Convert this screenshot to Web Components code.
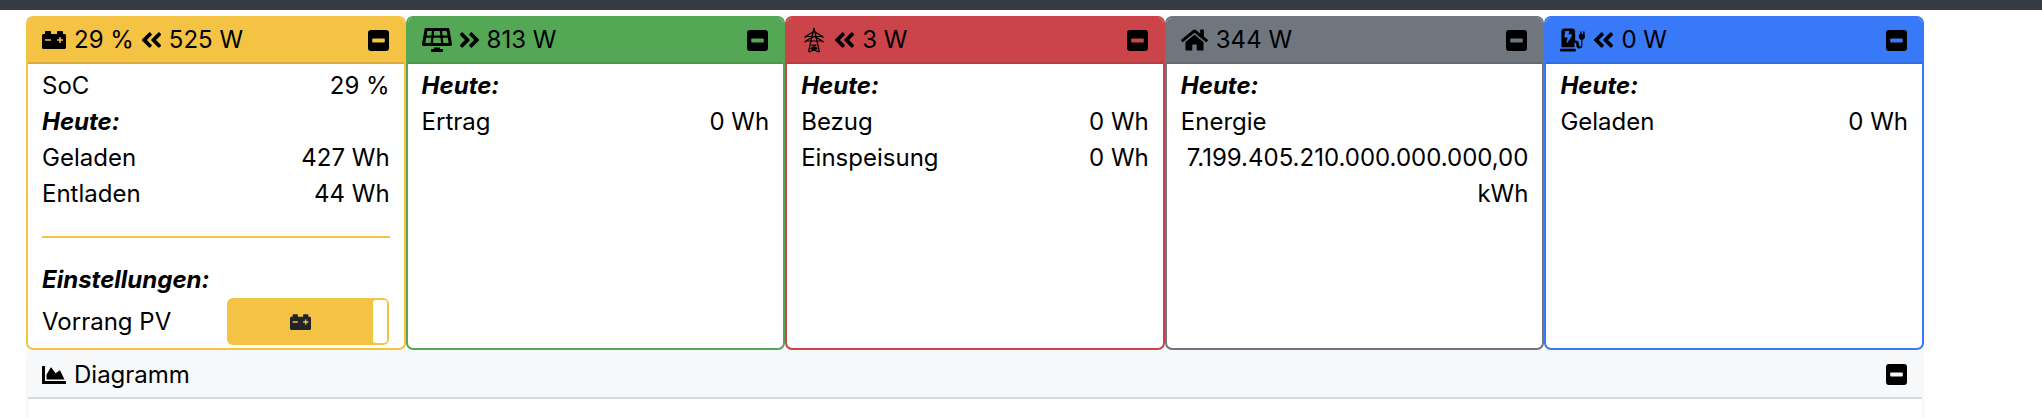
<!DOCTYPE html>
<html lang="de">
<head>
<meta charset="utf-8">
<title>openWB</title>
<style>
  html, body { margin: 0; background: #fff; }
  body { font: 400 24px/36px Inter, "Liberation Sans", sans-serif; color: #000; }
</style>
</head>
<body>
<top-bar></top-bar>
<card-grid>
  <power-card color="#f4c343" edge="#dcab3b">
    <span slot="title"><fa-icon name="battery"></fa-icon><b>29 %</b><fa-icon name="left"></fa-icon><b>525 W</b></span>
    <info-row><span slot="label">SoC</span><span slot="value">29 %</span></info-row>
    <section-title>Heute:</section-title>
    <info-row><span slot="label">Geladen</span><span slot="value">427 Wh</span></info-row>
    <info-row><span slot="label">Entladen</span><span slot="value">44 Wh</span></info-row>
    <card-divider></card-divider>
    <section-title>Einstellungen:</section-title>
    <info-row><span slot="label">Vorrang PV</span><pv-toggle slot="value"></pv-toggle></info-row>
  </power-card>
  <power-card color="#54a754" edge="#4c974c">
    <span slot="title"><fa-icon name="solar"></fa-icon><fa-icon name="right"></fa-icon><b>813 W</b></span>
    <section-title>Heute:</section-title>
    <info-row><span slot="label">Ertrag</span><span slot="value">0 Wh</span></info-row>
  </power-card>
  <power-card color="#cb444a" edge="#b73d43">
    <span slot="title"><fa-icon name="tower"></fa-icon><fa-icon name="left"></fa-icon><b>3 W</b></span>
    <section-title>Heute:</section-title>
    <info-row><span slot="label">Bezug</span><span slot="value">0 Wh</span></info-row>
    <info-row><span slot="label">Einspeisung</span><span slot="value">0 Wh</span></info-row>
  </power-card>
  <power-card color="#6f767d" edge="#646a71">
    <span slot="title"><fa-icon name="home"></fa-icon><b>344 W</b></span>
    <section-title>Heute:</section-title>
    <info-row><span slot="label">Energie</span><span slot="value">7.199.405.210.000.000.000,00 kWh</span></info-row>
  </power-card>
  <power-card color="#3779f7" edge="#316ddf">
    <span slot="title"><fa-icon name="charger"></fa-icon><fa-icon name="left"></fa-icon><b>0 W</b></span>
    <section-title>Heute:</section-title>
    <info-row><span slot="label">Geladen</span><span slot="value">0 Wh</span></info-row>
  </power-card>
</card-grid>
<chart-panel>Diagramm</chart-panel>

<script>
// Font Awesome style glyphs, [viewBox, path, width]
const ICONS = {
  battery: ['0 0 512 512', 'M480 128h-32V80c0-8.84-7.16-16-16-16h-96c-8.84 0-16 7.16-16 16v48H192V80c0-8.84-7.16-16-16-16H80c-8.84 0-16 7.16-16 16v48H32c-17.67 0-32 14.33-32 32v256c0 17.67 14.33 32 32 32h448c17.67 0 32-14.33 32-32V160c0-17.67-14.33-32-32-32zM192 264c0 4.42-3.58 8-8 8H72c-4.42 0-8-3.58-8-8v-16c0-4.42 3.58-8 8-8h112c4.42 0 8 3.58 8 8v16zm256 0c0 4.42-3.58 8-8 8h-40v40c0 4.42-3.58 8-8 8h-16c-4.42 0-8-3.58-8-8v-40h-40c-4.42 0-8-3.58-8-8v-16c0-4.42 3.58-8 8-8h40v-40c0-4.42 3.58-8 8-8h16c4.42 0 8 3.58 8 8v40h40c4.42 0 8 3.58 8 8v16z', 24],
  left: ['26 0 396 512', 'M223.7 239l136-136c9.4-9.4 24.6-9.4 33.9 0l22.6 22.6c9.4 9.4 9.4 24.6 0 33.9L319.9 256l96.4 96.4c9.4 9.4 9.4 24.6 0 33.9L393.7 409c-9.4 9.4-24.6 9.4-33.9 0l-136-136c-9.5-9.4-9.5-24.6-.1-34zm-192 34l136 136c9.4 9.4 24.6 9.4 33.9 0l22.6-22.6c9.4-9.4 9.4-24.6 0-33.9L127.9 256l96.4-96.4c9.4-9.4 9.4-24.6 0-33.9L201.7 103c-9.4-9.4-24.6-9.4-33.9 0l-136 136c-9.5 9.4-9.5 24.6-.1 34z', 19],
  right: ['26 0 396 512', 'M224.3 273l-136 136c-9.4 9.4-24.6 9.4-33.9 0l-22.6-22.6c-9.4-9.4-9.4-24.6 0-33.9l96.4-96.4-96.4-96.4c-9.4-9.4-9.4-24.6 0-33.9L54.3 103c9.4-9.4 24.6-9.4 33.9 0l136 136c9.5 9.4 9.5 24.6.1 34zm192-34l-136-136c-9.4-9.4-24.6-9.4-33.9 0l-22.6 22.6c-9.4 9.4-9.4 24.6 0 33.9l96.4 96.4-96.4 96.4c-9.4 9.4-9.4 24.6 0 33.9l22.6 22.6c9.4 9.4 24.6 9.4 33.9 0l136-136c9.4-9.2 9.4-24.4 0-33.8z', 19],
  solar: ['0 0 640 512', 'M431.98 448.01l-47.97.05V416h-128v32.21l-47.98.05c-8.82.01-15.97 7.16-15.98 15.99l-.05 31.73c-.01 8.85 7.17 16.03 16.02 16.02l223.96-.26c8.82-.01 15.97-7.16 15.98-15.98l.04-31.73c.01-8.85-7.17-16.03-16.02-16.02zM585.2 26.74C582.58 11.31 568.99 0 553.06 0H86.93C71 0 57.41 11.31 54.79 26.74-3.32 369.16.04 348.08.03 352c-.03 17.32 14.29 32 32.6 32h574.74c18.23 0 32.51-14.56 32.59-31.79.02-4.08 3.35 16.95-54.76-325.47zM259.83 64h120.33l9.77 96H250.06l9.77-96zm-75.17 256H71.09L90.1 208h105.97l-11.41 112zm16.29-160H98.24l16.28-96h96.19l-9.76 96zm32.82 160l11.4-112h149.65l11.4 112H233.77zm195.5-256h96.19l16.28 96H439.04l-9.77-96zm26.06 256l-11.4-112H549.9l19 112H455.33z', 30],
  home: ['0 0 576 512', 'M280.37 148.26L96 300.11V464a16 16 0 0 0 16 16l112.06-.29a16 16 0 0 0 15.92-16V368a16 16 0 0 1 16-16h64a16 16 0 0 1 16 16v95.64a16 16 0 0 0 16 16.05L464 480a16 16 0 0 0 16-16V300L295.67 148.26a12.19 12.19 0 0 0-15.3 0zM571.6 251.47L488 182.56V44.05a12 12 0 0 0-12-12h-56a12 12 0 0 0-12 12v72.61L318.47 43a48 48 0 0 0-61 0L4.34 251.47a12 12 0 0 0-1.6 16.9l25.5 31A12 12 0 0 0 45.15 301l235.22-193.74a12.19 12.19 0 0 1 15.3 0L530.9 301a12 12 0 0 0 16.9-1.6l25.5-31a12 12 0 0 0-1.7-16.93z', 27],
  charger: ['0 0 576 512', 'M336 448H16c-8.8 0-16 7.2-16 16v32c0 8.8 7.2 16 16 16h320c8.8 0 16-7.2 16-16v-32c0-8.8-7.2-16-16-16zm208-320V80c0-8.8-7.2-16-16-16s-16 7.2-16 16v48h-32V80c0-8.8-7.2-16-16-16s-16 7.2-16 16v48h-16c-8.8 0-16 7.2-16 16v32c0 35.8 23.5 66.1 56 76.3V376c0 13.2-10.800 24-24 24s-24-10.8-24-24v-28c0-44.2-35.8-80-80-80h-8V64c0-35.3-28.7-64-64-64H96C60.7 0 32 28.7 32 64v352h288V316h8c17.7 0 32 14.3 32 32v24c0 36.4 27.8 69.4 64 71.7 39.7 2.6 72-29.1 72-67.7V252.3c32.5-10.2 56-40.5 56-76.3v-32c0-8.8-7.2-16-16-16zM260 175.5l-92.8 137c-2.2 3.2-5.7 5.5-10.2 5.5-7.7 0-13.5-7.1-11.7-14.8l24-105.2H108c-7.2 0-12.7-6.4-11.9-13.9l16-120C112.7 59 118 55 124 55h72c7.8 0 13.5 7.4 11.6 15l-20.6 61h60.9c9.3 0 15.2 10.6 12.1 17.5z', 26],
  chart: ['0 0 512 512', 'M500 384c6.6 0 12 5.4 12 12v40c0 6.6-5.4 12-12 12H12c-6.6 0-12-5.4-12-12V76c0-6.6 5.4-12 12-12h40c6.6 0 12 5.4 12 12v308h436zM372.7 159.5L288 216l-85.3-113.7c-5.1-6.8-15.5-6.3-19.9 1L96 248v104h384l-89.9-187.8c-3.2-6.5-11.4-8.7-17.4-4.7z', 24]
};

class FaIcon extends HTMLElement {
  connectedCallback() {
    const name = this.getAttribute('name');
    const size = this.getAttribute('size');
    let svg;
    if (name === 'tower') {
      // no stock glyph for the pylon, drawn with strokes
      svg = `<svg width="26" height="26" viewBox="0 0 26 26" fill="none" stroke="currentColor" stroke-width="1.2">
        <path d="M13 1 L7.500 25 M13 1 L18.500 25"/>
        <path d="M4.500 9.500 L13 4.500 L21.500 9.500 M4 11 V9.500 M22 11 V9.500 M4.500 9.500 H21.500"/>
        <path d="M4.500 14 L13 9.500 L21.500 14 M4 15.500 V14 M22 15.500 V14 M4.500 14 H21.500"/>
        <path d="M10.500 18 H15.500 M9.500 21.500 H16.500 M10.500 18 L16.500 21.500 M15.500 18 L9.500 21.500 M9.500 21.500 L18 25 M16.500 21.500 L8 25"/>
      </svg>`;
    } else {
      const [box, d, w] = ICONS[name];
      const px = size || w;
      svg = `<svg width="${px}" height="26" viewBox="${box}" fill="currentColor"><path d="${d}"/></svg>`;
    }
    this.attachShadow({ mode: 'open' }).innerHTML = `
      <style>
        :host { display: inline-flex; align-items: center; height: 26px; }
        svg { display: block; }
      </style>${svg}`;
  }
}
customElements.define('fa-icon', FaIcon);

class MinusButton extends HTMLElement {
  constructor() {
    super();
    this.attachShadow({ mode: 'open' }).innerHTML = `
      <style>
        :host { display: block; width: 21px; height: 21px; }
        svg { display: block; }
      </style>
      <svg width="21" height="21" viewBox="0 0 21 21">
        <path fill-rule="evenodd" fill="#000" d="M3 0h15a3 3 0 0 1 3 3v15a3 3 0 0 1-3 3H3a3 3 0 0 1-3-3V3a3 3 0 0 1 3-3z M5 8.500a.8.8 0 0 0-.8.8v2.400a.8.8 0 0 0 .8.8h11a.8.8 0 0 0 .8-.8V9.300a.8.8 0 0 0-.8-.8z"/>
      </svg>`;
  }
}
customElements.define('minus-button', MinusButton);

class TopBar extends HTMLElement {
  constructor() {
    super();
    this.attachShadow({ mode: 'open' }).innerHTML = `
      <style>:host { display: block; height: 10px; background: #343a3f; }</style>`;
  }
}
customElements.define('top-bar', TopBar);

class CardGrid extends HTMLElement {
  constructor() {
    super();
    this.attachShadow({ mode: 'open' }).innerHTML = `
      <style>
        :host {
          display: grid;
          grid-template-columns: repeat(5, minmax(0, 1fr));
          margin: 6px 118px 0 26px;
        }
      </style>
      <slot></slot>`;
  }
}
customElements.define('card-grid', CardGrid);

class PowerCard extends HTMLElement {
  constructor() {
    super();
    const shadow = this.attachShadow({ mode: 'open' });
    shadow.innerHTML = `
      <style>
        :host {
          display: flex;
          flex-direction: column;
          box-sizing: border-box;
          min-width: 0;
          border: 2px solid var(--card-color);
          border-radius: 7px;
          background: #fff;
          overflow: hidden;
        }
        header {
          display: flex;
          align-items: center;
          justify-content: space-between;
          box-sizing: border-box;
          height: 46px;
          padding: 0 15px 0 14px;
          background: var(--card-color);
          border-bottom: 2px solid var(--card-edge);
        }
        .body { padding: 4px 14px 3px; }
      </style>
      <header><slot name="title"></slot><minus-button></minus-button></header>
      <div class="body"><slot></slot></div>`;
  }
  connectedCallback() {
    this.style.setProperty('--card-color', this.getAttribute('color'));
    this.style.setProperty('--card-edge', this.getAttribute('edge'));
    // title spacing lives in the light dom span
    const title = this.querySelector('[slot=title]');
    title.style.cssText = 'display:inline-flex;align-items:center;gap:8px;line-height:26px';
    title.querySelectorAll('b').forEach(b => { b.style.fontWeight = '400'; });
  }
}
customElements.define('power-card', PowerCard);

class InfoRow extends HTMLElement {
  constructor() {
    super();
    this.attachShadow({ mode: 'open' }).innerHTML = `
      <style>
        :host {
          display: flex;
          flex-wrap: wrap;
          align-items: center;
          justify-content: space-between;
        }
        .value { margin-left: auto; text-align: right; }
      </style>
      <slot name="label"></slot>
      <div class="value"><slot name="value"></slot></div>`;
  }
}
customElements.define('info-row', InfoRow);

class SectionTitle extends HTMLElement {
  constructor() {
    super();
    this.attachShadow({ mode: 'open' }).innerHTML = `
      <style>:host { display: block; font-weight: 700; font-style: italic; }</style>
      <slot></slot>`;
  }
}
customElements.define('section-title', SectionTitle);

class CardDivider extends HTMLElement {
  constructor() {
    super();
    this.attachShadow({ mode: 'open' }).innerHTML = `
      <style>
        :host { display: block; height: 2px; margin: 24px 0; background: var(--card-color); }
      </style>`;
  }
}
customElements.define('card-divider', CardDivider);

class PvToggle extends HTMLElement {
  constructor() {
    super();
    this.attachShadow({ mode: 'open' }).innerHTML = `
      <style>
        :host {
          display: flex;
          box-sizing: border-box;
          width: 162px;
          height: 47px;
          margin-right: 1px;
          padding: 2px;
          border-radius: 6px;
          background: var(--card-color);
        }
        .side { flex: 1; display: flex; align-items: center; justify-content: center; color: #212529; }
        .handle { width: 14px; background: #fff; border-radius: 3px; }
      </style>
      <div class="side"><fa-icon name="battery" size="21"></fa-icon></div>
      <div class="handle"></div>`;
  }
}
customElements.define('pv-toggle', PvToggle);

class ChartPanel extends HTMLElement {
  constructor() {
    super();
    this.attachShadow({ mode: 'open' }).innerHTML = `
      <style>
        :host {
          display: block;
          box-sizing: border-box;
          margin: 0 118px 0 26px;
          height: 68px;
          border: 2px solid #f7f8fa;
          border-bottom: 0;
          border-radius: 7px 7px 0 0;
          overflow: hidden;
        }
        header {
          display: flex;
          align-items: center;
          justify-content: space-between;
          box-sizing: border-box;
          height: 47px;
          padding: 0 15px 0 14px;
          background: #f7f8fa;
          border-bottom: 2px solid #d8d9da;
        }
        .title { display: inline-flex; align-items: center; gap: 8px; line-height: 26px; }
      </style>
      <header>
        <span class="title"><fa-icon name="chart"></fa-icon><slot></slot></span>
        <minus-button></minus-button>
      </header>`;
  }
}
customElements.define('chart-panel', ChartPanel);
</script>
</body>
</html>
